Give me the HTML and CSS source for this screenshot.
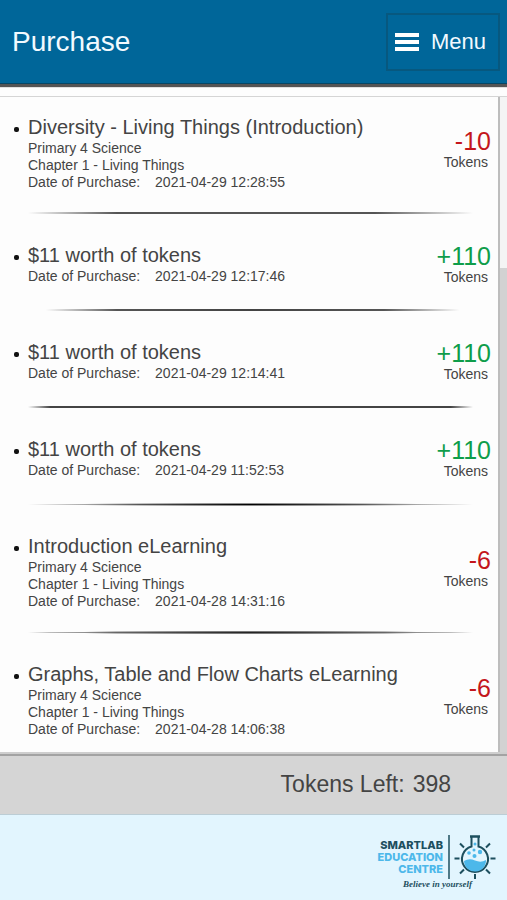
FILE: index.html
```html
<!DOCTYPE html>
<html lang="en">
<head>
<meta charset="utf-8">
<meta name="viewport" content="width=device-width, initial-scale=1">
<title>Purchase</title>
<link rel="stylesheet" href="styles.css">
</head>
<body>
<header class="topbar">
  <h1 class="topbar-title">Purchase</h1>
  <button class="menu" type="button">
    <svg class="menu-icon" viewBox="0 0 24 18" aria-hidden="true"><path d="M0 0h24v4H0zM0 7h24v4H0zM0 14h24v4H0z" fill="#fff"/></svg>
    Menu
  </button>
</header>
<main class="history">
  <ul class="entries">
    <li class="entry course">
      <div class="detail">
        <h2 class="title">Diversity - Living Things (Introduction)</h2>
        <p>Primary 4 Science</p>
        <p>Chapter 1 - Living Things</p>
        <p class="date"><span>Date of Purchase:</span><time>2021-04-29 12:28:55</time></p>
      </div>
      <div class="cost"><strong class="amount spent">-10</strong><span>Tokens</span></div>
      <hr class="rule soft">
    </li>
    <li class="entry">
      <div class="detail">
        <h2 class="title">$11 worth of tokens</h2>
        <p class="date"><span>Date of Purchase:</span><time>2021-04-29 12:17:46</time></p>
      </div>
      <div class="cost"><strong class="amount added">+110</strong><span>Tokens</span></div>
      <hr class="rule short">
    </li>
    <li class="entry">
      <div class="detail">
        <h2 class="title">$11 worth of tokens</h2>
        <p class="date"><span>Date of Purchase:</span><time>2021-04-29 12:14:41</time></p>
      </div>
      <div class="cost"><strong class="amount added">+110</strong><span>Tokens</span></div>
      <hr class="rule">
    </li>
    <li class="entry">
      <div class="detail">
        <h2 class="title">$11 worth of tokens</h2>
        <p class="date"><span>Date of Purchase:</span><time>2021-04-29 11:52:53</time></p>
      </div>
      <div class="cost"><strong class="amount added">+110</strong><span>Tokens</span></div>
      <hr class="rule peak">
    </li>
    <li class="entry course">
      <div class="detail">
        <h2 class="title">Introduction eLearning</h2>
        <p>Primary 4 Science</p>
        <p>Chapter 1 - Living Things</p>
        <p class="date"><span>Date of Purchase:</span><time>2021-04-28 14:31:16</time></p>
      </div>
      <div class="cost"><strong class="amount spent">-6</strong><span>Tokens</span></div>
      <hr class="rule taper">
    </li>
    <li class="entry course">
      <div class="detail">
        <h2 class="title">Graphs, Table and Flow Charts eLearning</h2>
        <p>Primary 4 Science</p>
        <p>Chapter 1 - Living Things</p>
        <p class="date"><span>Date of Purchase:</span><time>2021-04-28 14:06:38</time></p>
      </div>
      <div class="cost"><strong class="amount spent">-6</strong><span>Tokens</span></div>
    </li>
  </ul>
  <div class="track" aria-hidden="true"><div class="thumb"></div></div>
</main>
<section class="balance"><span>Tokens Left:</span><span>398</span></section>
<footer class="footer">
  <div class="brand">
    <div class="brand-row">
      <div class="brand-name"><span class="dark">SMARTLAB</span><span>EDUCATION</span><span>CENTRE</span></div>
      <svg class="flask" viewBox="0 0 44 46" aria-hidden="true">
        <g fill="none" stroke="#1d4f5e" stroke-width="2">
          <path d="M1.500 24.500h5M37.500 24.500h5M7 9.500l4 4M37 9.500l-4 4M7 39.500l4-4M37 39.500l-4-4M22 40v5"/>
          <path d="M18.500 3v9.500a13 13 0 1 0 7 0V3" fill="#e2f5fe"/>
          <path d="M17 2.500h10" stroke-width="2.500"/>
        </g>
        <path d="M11 27q5-3 11-.5t11-.5a11 11 0 0 1-22 1z" fill="#4db8ea"/>
        <g fill="#4db8ea"><circle cx="22" cy="10" r="1.500"/><circle cx="21" cy="16" r="1.500"/><circle cx="16" cy="19" r="1.800"/><circle cx="27" cy="18" r="2.200"/><circle cx="21.500" cy="22" r="2"/></g>
      </svg>
    </div>
    <p class="tagline">Believe in yourself</p>
  </div>
</footer>
</body>
</html>
```
FILE: styles.css
```css
* { box-sizing: border-box; }
body {
  margin: 0;
  min-height: 100vh;
  display: flex;
  flex-direction: column;
  background: #fdfdfd;
  color: #444;
  font: 14px/17px "Liberation Sans", Arial, sans-serif;
}
h1, h2, p, ul { margin: 0; padding: 0; font-weight: normal; }

.topbar {
  display: flex;
  align-items: center;
  justify-content: space-between;
  height: 84px;
  padding: 0 7px 0 12px;
  background: #006699;
  border-bottom: 1px solid #064766;
  box-shadow: 0 2px 1px 1px #555;
  color: #f2faff;
}
.topbar-title { font-size: 28px; line-height: 32px; }
.menu {
  display: flex;
  align-items: center;
  gap: 12px;
  height: 58px;
  padding: 0 12px 0 7px;
  border: 2px solid #07587f;
  background: transparent;
  color: inherit;
  font: 22px/28px "Liberation Sans", Arial, sans-serif;
}
.menu-icon { width: 24px; height: 18px; }

.history {
  display: flex;
  margin-top: 12px;
  border-top: 1px solid #d5d5d5;
}
.entries {
  flex: 1;
  list-style: none;
  border-right: 2px solid #bdbdbd;
  padding-bottom: 14px;
}
.entry {
  display: grid;
  grid-template-columns: 1fr auto;
  align-items: center;
  padding: 28px 7px 0 28px;
}
.entry:first-child { padding-top: 18px; }
.title {
  position: relative;
  margin-bottom: 1px;
  font-size: 20px;
  line-height: 24px;
}
.title::before {
  content: "";
  position: absolute;
  left: -14px;
  top: 12px;
  width: 5px;
  height: 5px;
  border-radius: 2px;
  background: #111;
}
.date { display: flex; gap: 15px; }
.cost {
  display: flex;
  flex-direction: column;
  align-items: flex-end;
  margin: 2px 0 -1px;
}
.cost span { padding-right: 3px; }
.course .cost { margin: 0 0 6px; }
.amount { font-size: 25px; line-height: 25px; font-weight: normal; }
.spent { color: #c4161c; }
.added { color: #0f9d4a; }

.rule {
  grid-column: 1 / -1;
  width: 100%;
  height: 2px;
  margin: 24px 0 0;
  padding: 0;
  border: 0;
  background: linear-gradient(90deg, transparent, #444 5%, #444 95%, transparent);
  background-size: calc(100% - 18px) 100%;
  background-repeat: no-repeat;
}
.course .rule { margin-top: 21px; }
.soft { background-image: linear-gradient(90deg, transparent, #555 20%, #555 78%, transparent); }
.short { background-image: linear-gradient(90deg, transparent 4%, #555 20%, #444 50%, #555 80%, transparent 97%); }
.peak, .taper {
  height: 3px;
  background-image: radial-gradient(closest-side, #000, #555 50%, transparent);
}
.taper { background-image: radial-gradient(closest-side, #222, #666 60%, #bbb 90%, transparent); }

.track {
  width: 7px;
  display: grid;
  grid-template-rows: 172fr 486fr;
  background: #f4f4f4;
}
.thumb { grid-row: 2; background: #d2d2d2; }

.balance {
  display: flex;
  justify-content: flex-end;
  align-items: center;
  gap: 8px;
  height: 63px;
  padding-right: 56px;
  border-top: 2px solid #cecece;
  border-bottom: 1px solid #bccdd5;
  background: #d5d5d5;
  box-shadow: inset 0 2px 0 #a3a3a3;
  font-size: 23px;
  line-height: 28px;
}

.footer {
  flex: 1;
  display: flex;
  justify-content: flex-end;
  align-items: flex-start;
  padding: 19px 10px 8px;
  background: #e2f5fe;
}
.brand { color: #4db8ea; }
.brand-row { display: flex; align-items: center; }
.brand-name {
  display: flex;
  flex-direction: column;
  align-items: flex-end;
  padding: 4px 5px 4px 0;
  border-right: 2px solid #4f7987;
  font: 800 11px/12px Inter, sans-serif;
}
.dark { color: #1d4f5e; }
.flask { width: 44px; height: 46px; margin-left: 3px; }
.tagline {
  padding-right: 25px;
  text-align: right;
  color: #1d4f5e;
  font: italic bold 9px/9px "Liberation Serif", serif;
}
```
